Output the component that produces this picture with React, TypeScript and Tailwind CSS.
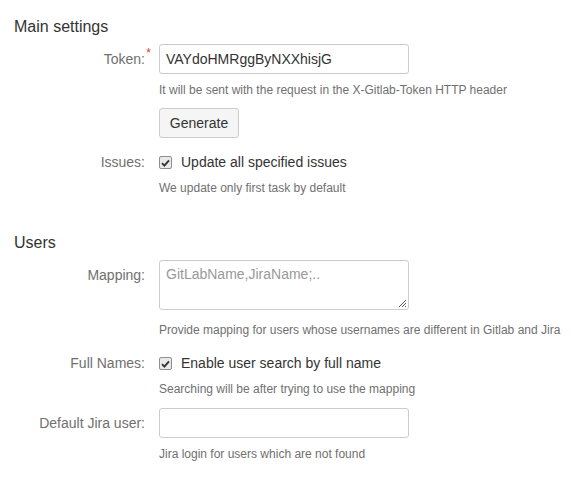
import React from "react";

function Check() {
  return (
    <span className="inline-flex items-center justify-center w-[13px] h-[13px] border border-[#8f8f8f] rounded-[2px] bg-[#e9e9e9] shrink-0">
      <svg width="9" height="8" viewBox="0 0 9 8">
        <path d="M1 4.2 L3.4 6.6 L8 1.4" stroke="#333" strokeWidth="1.9" fill="none" />
      </svg>
    </span>
  );
}

function Row({ label, required, children, align = "center" }: { label: string; required?: boolean; children: React.ReactNode; align?: string }) {
  return (
    <div className={"flex " + (align === "top" ? "items-start" : "items-center")}>
      <div className={"w-[131px] shrink-0 text-right text-[14px] text-[#707070] relative " + (align === "top" ? "pt-[5px]" : "")}>
        {label}
        {required && <span className="absolute -right-[6px] -top-[5px] text-[#d04437] text-[12px]">*</span>}
      </div>
      <div className="ml-[14px]">{children}</div>
    </div>
  );
}

const help = "ml-[145px] text-[12px] leading-[14px] text-[#707070] whitespace-nowrap";

export default function App() {
  return (
    <div className="w-[575px] h-[482px] bg-white text-[#333] px-[14px]" style={{ fontFamily: '"Liberation Sans", Arial, sans-serif' }}>
      <h2 className="text-[16px] leading-[20px] pt-[17px] text-[#333]">Main settings</h2>
      <div className="mt-[7px]">
        <Row label="Token:" required>
          <div className="w-[250px] h-[30px] border border-[#ccc] rounded-[3px] px-[6px] flex items-center text-[14px] text-[#333]">
            VAYdoHMRggByNXXhisjG
          </div>
        </Row>
        <div className={help + " mt-[9px]"}>It will be sent with the request in the X-Gitlab-Token HTTP header</div>
        <div className="ml-[145px] mt-[11px] w-[80px] h-[30px] border border-[#ccc] rounded-[3px] bg-[#f5f5f5] flex items-center justify-center text-[14px] text-[#333]">Generate</div>
        <div className="mt-[14px]">
          <Row label="Issues:">
            <div className="flex items-center gap-[9px] text-[14px] text-[#333]">
              <Check />
              <span>Update all specified issues</span>
            </div>
          </Row>
        </div>
        <div className={help + " mt-[8px]"}>We update only first task by default</div>
      </div>

      <h2 className="text-[16px] leading-[20px] mt-[38px] text-[#333]">Users</h2>
      <div className="mt-[7px]">
        <Row label="Mapping:" align="top">
          <div className="relative w-[250px] h-[50px] border border-[#ccc] rounded-[3px] px-[6px] pt-[3px] text-[14px] text-[#999]">
            GitLabName,JiraName;..
            <svg className="absolute right-[1px] bottom-[1px]" width="9" height="9" viewBox="0 0 9 9">
              <path d="M8 1 L1 8 M8 4 L4 8 M8 7 L7 8" stroke="#555" strokeWidth="1" />
            </svg>
          </div>
        </Row>
        <div className={help + " mt-[13px]"}>Provide mapping for users whose usernames are different in Gitlab and Jira</div>
        <div className="mt-[16px]">
          <Row label="Full Names:">
            <div className="flex items-center gap-[9px] text-[14px] text-[#333]">
              <Check />
              <span>Enable user search by full name</span>
            </div>
          </Row>
        </div>
        <div className={help + " mt-[8px]"}>Searching will be after trying to use the mapping</div>
        <div className="mt-[12px]">
          <Row label="Default Jira user:">
            <div className="w-[250px] h-[30px] border border-[#ccc] rounded-[3px]"></div>
          </Row>
        </div>
        <div className={help + " mt-[9px]"}>Jira login for users which are not found</div>
      </div>
    </div>
  );
}
